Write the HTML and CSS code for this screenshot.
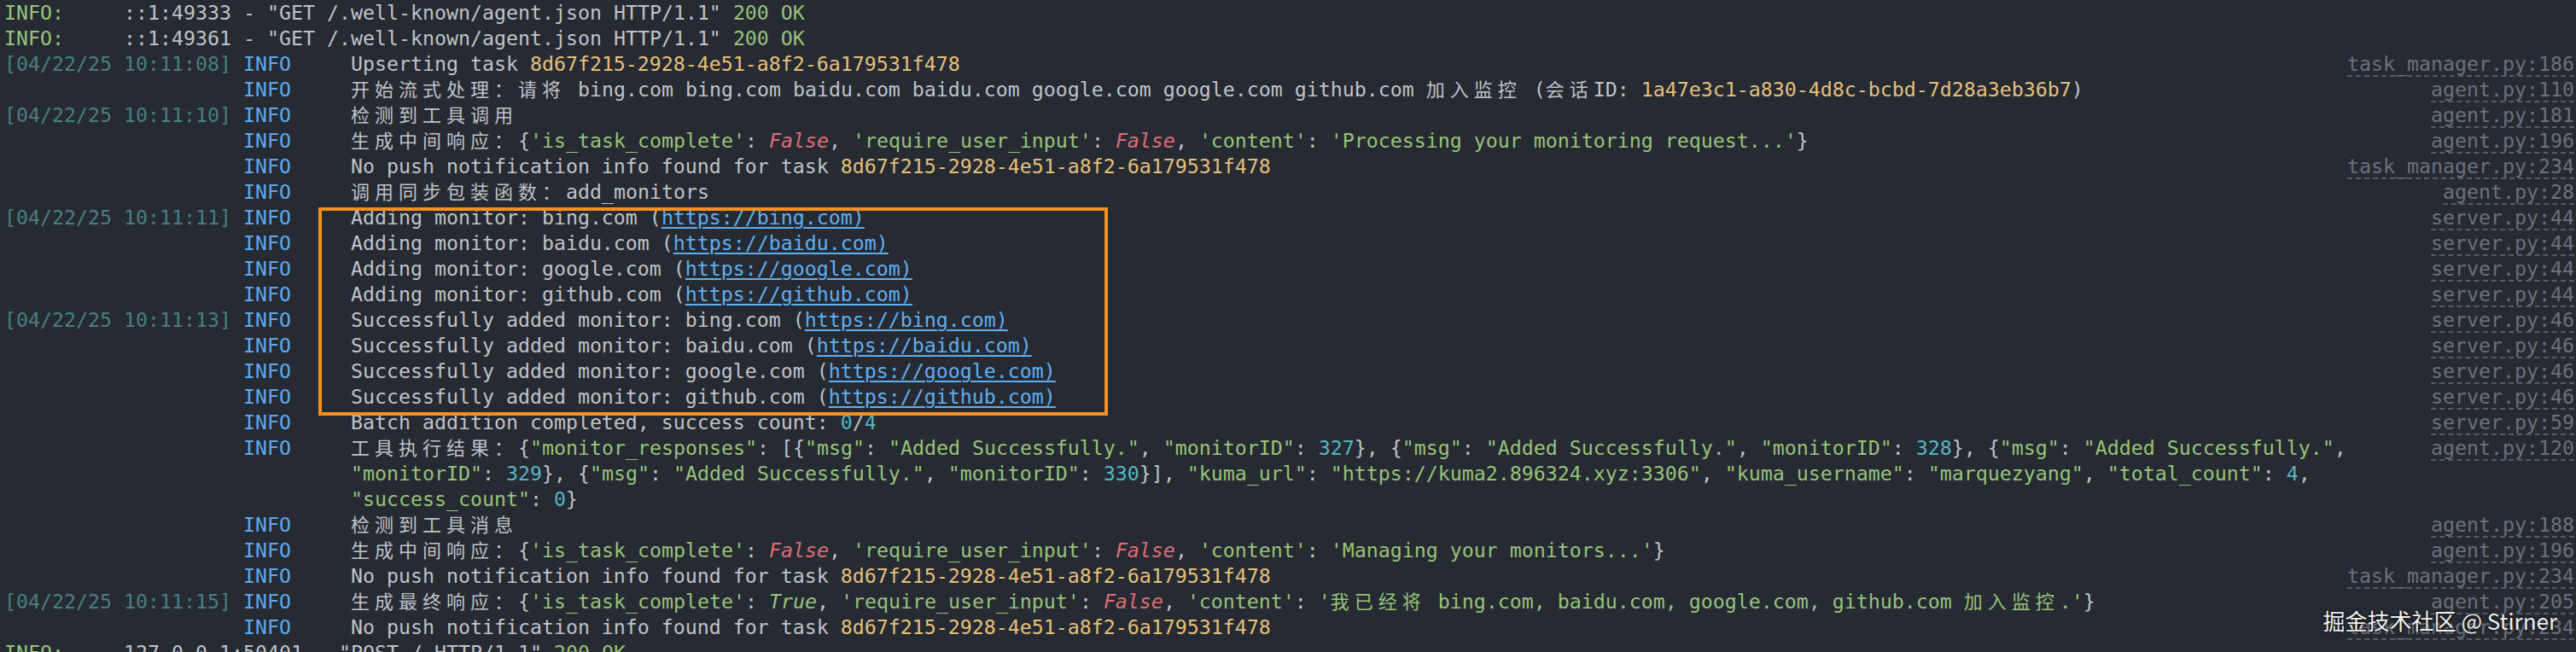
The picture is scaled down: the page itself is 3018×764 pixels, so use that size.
FILE: index.html
```html
<!DOCTYPE html>
<html lang="zh-CN">
<head>
<meta charset="utf-8">
<title>Terminal log</title>
<link rel="stylesheet" href="styles.css">
</head>
<body>
<div class="term">
  <div class="log">
    <div class="row plain"><span class="g">INFO:</span>     ::1:49333 - "GET /.well-known/agent.json HTTP/1.1" <span class="g">200 OK</span></div>
    <div class="row plain"><span class="g">INFO:</span>     ::1:49361 - "GET /.well-known/agent.json HTTP/1.1" <span class="g">200 OK</span></div>

    <div class="row"><span class="ts">[04/22/25 10:11:08]</span><span class="lv">INFO</span><span class="msg">Upserting task <span class="y">8d67f215-2928-4e51-a8f2-6a179531f478</span></span><span class="src">task_manager.py:186</span></div>
    <div class="row"><span class="ts"></span><span class="lv">INFO</span><span class="msg"><span class="h">开始流式处理：请将</span> bing.com bing.com baidu.com baidu.com google.com google.com github.com <span class="h">加入监控</span> (<span class="h">会话</span>ID: <span class="y">1a47e3c1-a830-4d8c-bcbd-7d28a3eb36b7</span>)</span><span class="src">agent.py:110</span></div>
    <div class="row"><span class="ts">[04/22/25 10:11:10]</span><span class="lv">INFO</span><span class="msg"><span class="h">检测到工具调用</span></span><span class="src">agent.py:181</span></div>
    <div class="row"><span class="ts"></span><span class="lv">INFO</span><span class="msg"><span class="h">生成中间响应：</span>{<span class="g">'is_task_complete'</span>: <span class="r">False</span>, <span class="g">'require_user_input'</span>: <span class="r">False</span>, <span class="g">'content'</span>: <span class="g">'Processing your monitoring request...'</span>}</span><span class="src">agent.py:196</span></div>
    <div class="row"><span class="ts"></span><span class="lv">INFO</span><span class="msg">No push notification info found for task <span class="y">8d67f215-2928-4e51-a8f2-6a179531f478</span></span><span class="src">task_manager.py:234</span></div>
    <div class="row"><span class="ts"></span><span class="lv">INFO</span><span class="msg"><span class="h">调用同步包装函数：</span>add_monitors</span><span class="src">agent.py:28</span></div>

    <div class="row"><span class="ts">[04/22/25 10:11:11]</span><span class="lv">INFO</span><span class="msg">Adding monitor: bing.com (<span class="u">https://bing.com)</span></span><span class="src">server.py:44</span></div>
    <div class="row"><span class="ts"></span><span class="lv">INFO</span><span class="msg">Adding monitor: baidu.com (<span class="u">https://baidu.com)</span></span><span class="src">server.py:44</span></div>
    <div class="row"><span class="ts"></span><span class="lv">INFO</span><span class="msg">Adding monitor: google.com (<span class="u">https://google.com)</span></span><span class="src">server.py:44</span></div>
    <div class="row"><span class="ts"></span><span class="lv">INFO</span><span class="msg">Adding monitor: github.com (<span class="u">https://github.com)</span></span><span class="src">server.py:44</span></div>
    <div class="row"><span class="ts">[04/22/25 10:11:13]</span><span class="lv">INFO</span><span class="msg">Successfully added monitor: bing.com (<span class="u">https://bing.com)</span></span><span class="src">server.py:46</span></div>
    <div class="row"><span class="ts"></span><span class="lv">INFO</span><span class="msg">Successfully added monitor: baidu.com (<span class="u">https://baidu.com)</span></span><span class="src">server.py:46</span></div>
    <div class="row"><span class="ts"></span><span class="lv">INFO</span><span class="msg">Successfully added monitor: google.com (<span class="u">https://google.com)</span></span><span class="src">server.py:46</span></div>
    <div class="row"><span class="ts"></span><span class="lv">INFO</span><span class="msg">Successfully added monitor: github.com (<span class="u">https://github.com)</span></span><span class="src">server.py:46</span></div>
    <div class="row"><span class="ts"></span><span class="lv">INFO</span><span class="msg">Batch addition completed, success count: <span class="c">0</span>/<span class="c">4</span></span><span class="src">server.py:59</span></div>

    <div class="row"><span class="ts"></span><span class="lv">INFO</span><span class="msg"><span class="h">工具执行结果：</span>{<span class="g">"monitor_responses"</span>: [{<span class="g">"msg"</span>: <span class="g">"Added Successfully."</span>, <span class="g">"monitorID"</span>: <span class="c">327</span>}, {<span class="g">"msg"</span>: <span class="g">"Added Successfully."</span>, <span class="g">"monitorID"</span>: <span class="c">328</span>}, {<span class="g">"msg"</span>: <span class="g">"Added Successfully."</span>,</span><span class="src">agent.py:120</span></div>
    <div class="row"><span class="ts"></span><span class="lv"></span><span class="msg"><span class="g">"monitorID"</span>: <span class="c">329</span>}, {<span class="g">"msg"</span>: <span class="g">"Added Successfully."</span>, <span class="g">"monitorID"</span>: <span class="c">330</span>}], <span class="g">"kuma_url"</span>: <span class="g">"https://kuma2.896324.xyz:3306"</span>, <span class="g">"kuma_username"</span>: <span class="g">"marquezyang"</span>, <span class="g">"total_count"</span>: <span class="c">4</span>,</span><span class="src"></span></div>
    <div class="row"><span class="ts"></span><span class="lv"></span><span class="msg"><span class="g">"success_count"</span>: <span class="c">0</span>}</span><span class="src"></span></div>

    <div class="row"><span class="ts"></span><span class="lv">INFO</span><span class="msg"><span class="h">检测到工具消息</span></span><span class="src">agent.py:188</span></div>
    <div class="row"><span class="ts"></span><span class="lv">INFO</span><span class="msg"><span class="h">生成中间响应：</span>{<span class="g">'is_task_complete'</span>: <span class="r">False</span>, <span class="g">'require_user_input'</span>: <span class="r">False</span>, <span class="g">'content'</span>: <span class="g">'Managing your monitors...'</span>}</span><span class="src">agent.py:196</span></div>
    <div class="row"><span class="ts"></span><span class="lv">INFO</span><span class="msg">No push notification info found for task <span class="y">8d67f215-2928-4e51-a8f2-6a179531f478</span></span><span class="src">task_manager.py:234</span></div>
    <div class="row"><span class="ts">[04/22/25 10:11:15]</span><span class="lv">INFO</span><span class="msg"><span class="h">生成最终响应：</span>{<span class="g">'is_task_complete'</span>: <span class="gi">True</span>, <span class="g">'require_user_input'</span>: <span class="r">False</span>, <span class="g">'content'</span>: <span class="g">'<span class="h">我已经将</span> bing.com, baidu.com, google.com, github.com <span class="h">加入监控</span>.'</span>}</span><span class="src">agent.py:205</span></div>
    <div class="row"><span class="ts"></span><span class="lv">INFO</span><span class="msg">No push notification info found for task <span class="y">8d67f215-2928-4e51-a8f2-6a179531f478</span></span><span class="src">task_manager.py:234</span></div>
    <div class="row plain"><span class="g">INFO:</span>     127.0.0.1:50401 - "POST / HTTP/1.1" <span class="g">200 OK</span></div>
  </div>

  <div class="mark"></div>
  <div class="watermark">掘金技术社区 @ Stirner</div>
</div>
</body>
</html>
```

FILE: styles.css
```css
html, body {
  margin: 0;
  padding: 0;
  background: #262a32;
}

body {
  width: 3018px;
  height: 764px;
  overflow: hidden;
}

.term {
  position: relative;
  width: 3018px;
  height: 764px;
  background: #262a32;
  color: #bfc3ca;
  font-family: "DejaVu Sans Mono", "Liberation Mono", monospace;
  font-size: 23.25px;
  line-height: 30px;
}

.log {
  display: flex;
  flex-direction: column;
  padding: 0 2px 0 5px;
}

.row {
  display: grid;
  grid-template-columns: 20ch 9ch 1fr auto;
  height: 30px;
  white-space: pre;
}

.row.plain {
  display: block;
}

.ts {
  color: #4a7f80;
}

.lv {
  color: #5ea9ea;
}

.msg {
  white-space: pre;
}

.src {
  color: #6b717c;
  text-align: right;
  text-decoration: underline dashed #565c67;
  text-decoration-thickness: 1.5px;
  text-underline-offset: 5px;
}

.h {
  font-family: "Noto Sans CJK SC", "Noto Sans CJK JP", sans-serif;
  font-size: 22px;
  line-height: 22px;
  letter-spacing: 6px;
}

.g { color: #98c379; }
.gi { color: #98c379; font-style: italic; }
.y { color: #e5c07b; }
.r { color: #e06c75; font-style: italic; }
.c { color: #56b6c2; }

.u {
  color: #61afef;
  text-decoration: underline;
  text-decoration-thickness: 1.5px;
  text-underline-offset: 3px;
}

.mark {
  position: absolute;
  left: 373px;
  top: 243px;
  width: 917px;
  height: 236px;
  border: 4px solid #f5901f;
}

.watermark {
  position: absolute;
  right: 22px;
  top: 709px;
  font-family: "Noto Sans CJK SC", "Noto Sans", sans-serif;
  font-size: 26px;
  line-height: 36px;
  color: #f2f2f2;
  text-shadow: 0 0 3px rgba(0, 0, 0, 0.9), 0 0 1px rgba(0, 0, 0, 0.9);
  white-space: pre;
}
```
